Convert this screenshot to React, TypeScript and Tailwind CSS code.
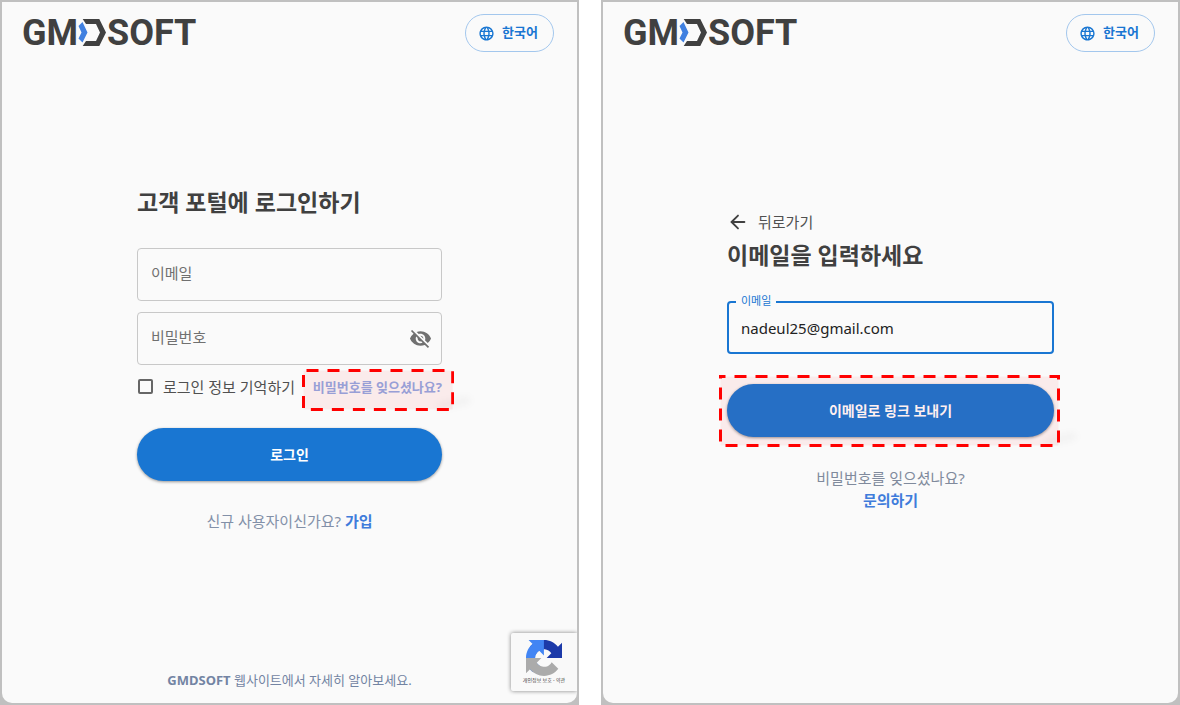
import { useState } from "react"
import type { ReactNode } from "react"
import { ArrowLeft } from "lucide-react"
import { MdLanguage, MdVisibility, MdVisibilityOff } from "react-icons/md"

function Logo() {
  return (
    <svg viewBox="0 0 173 27" className="mt-[5px] h-[27px] w-[173px] overflow-visible" role="img" aria-label="GMDSOFT">
      <g fill="#404040" fontFamily="Roboto, sans-serif" fontWeight="700" fontSize="36">
        <text x="-2" y="26">GM</text>
        <text x="83" y="26">SOFT</text>
      </g>
      <path d="M58.5 3 63.5 13.4 58.5 23.5 54.5 19.5 57.5 13.4 54.5 7Z" fill="#4080e0" />
      <path
        d="M58.7 0H75.3L82 13.4 75.3 27H58.7L62 22H72L76 13.4 72 5H62Z"
        fill="#404040"
      />
    </svg>
  )
}

function LanguageButton() {
  return (
    <button
      type="button"
      className="flex h-[38px] items-center gap-[7px] rounded-full border border-[#a3c7ed] pr-[15px] pl-3 text-[13px] font-bold text-[#1976d2]"
    >
      <MdLanguage size={17} />
      한국어
    </button>
  )
}

// Dashed red callout drawn over a control
function Callout({ offset, className }: { offset: number; className: string }) {
  return (
    <div className={`pointer-events-none absolute ${className}`}>
      <div className="absolute -right-4 bottom-1 h-2 w-8 -rotate-12 bg-black/3 blur-[3px]" />
      <svg className="absolute inset-0 h-full w-full" aria-hidden="true">
        <rect
          x="1.5"
          y="1.5"
          className="h-[calc(100%-3px)] w-[calc(100%-3px)]"
          fill="#ff0000"
          fillOpacity="0.06"
          stroke="#ff0000"
          strokeWidth="3"
          strokeDasharray="12 9"
          strokeDashoffset={offset}
        />
      </svg>
    </div>
  )
}

function Panel({ children, footer }: { children: ReactNode; footer?: ReactNode }) {
  return (
    <section className="flex bg-[#c0c0c0] p-[2px]">
      <div className="relative flex flex-1 flex-col overflow-hidden rounded-b-[10px] bg-[#fafafa]">
        <header className="flex items-start justify-between pt-3 pr-[23px] pl-[22px]">
          <Logo />
          <LanguageButton />
        </header>
        <main className="flex flex-1 flex-col items-center justify-center">{children}</main>
        <footer className="h-[35px] text-center text-[13px] leading-[24px] text-[#7384a3]">{footer}</footer>
      </div>
    </section>
  )
}

function SubmitButton({ children }: { children: ReactNode }) {
  return (
    <button
      type="submit"
      className="h-[53px] w-full rounded-full bg-[#1976d2] text-[14px] font-bold text-white shadow-[0_1px_3px_rgba(0,0,0,0.4)]"
    >
      {children}
    </button>
  )
}

function RecaptchaBadge() {
  return (
    <aside className="absolute right-0 bottom-3 flex h-[58px] w-[66px] flex-col items-center rounded-l-[2px] bg-[#f9f9f9] pt-[7px] shadow-[0_0_4px_#808080]">
      <svg viewBox="0 0 64 64" className="size-9" aria-hidden="true">
        <path
          d="M64 31.955l-.033-1.37V4.687l-7.16 7.16C50.948 4.674 42.033.093 32.05.093c-10.4 0-19.622 4.96-25.458 12.64l11.736 11.86a15.55 15.55 0 0 1 4.754-5.334c2.05-1.6 4.952-2.906 8.968-2.906.485 0 .86.057 1.135.163 4.976.393 9.288 3.14 11.828 7.124l-8.307 8.307L64 31.953"
          fill="#1c3aa9"
        />
        <path
          d="M31.862.094l-1.37.033H4.594l7.16 7.16C4.58 13.147 0 22.06 0 32.046c0 10.4 4.96 19.622 12.64 25.458L24.5 45.768a15.55 15.55 0 0 1-5.334-4.754c-1.6-2.05-2.906-4.952-2.906-8.968 0-.485.057-.86.163-1.135.393-4.976 3.14-9.288 7.124-11.828l8.307 8.307L31.86.095"
          fill="#4285f4"
        />
        <path
          d="M.001 32.045l.033 1.37v25.898l7.16-7.16c5.86 7.173 14.774 11.754 24.76 11.754 10.4 0 19.622-4.96 25.458-12.64l-11.736-11.86a15.55 15.55 0 0 1-4.754 5.334c-2.05 1.6-4.952 2.906-8.968 2.906-.485 0-.86-.057-1.135-.163-4.976-.393-9.288-3.14-11.828-7.124l8.307-8.307c-10.522.04-22.4.066-27.295-.005"
          fill="#ababab"
        />
      </svg>
      <p className="text-[5px] leading-[8px] text-[#444444]">
        <a href="#privacy">개인정보 보호</a> - <a href="#terms">약관</a>
      </p>
    </aside>
  )
}

const fieldClass =
  "peer h-[53px] w-full rounded-[4px] border border-[#c8c8c8] bg-transparent px-[13px] text-[15px] text-[#222222] outline-none"
const fieldLabelClass =
  "pointer-events-none absolute top-[14px] left-[14px] text-[15px] leading-[22px] text-[#707070] peer-focus:invisible peer-valid:invisible"

function LoginPanel() {
  const [visible, setVisible] = useState(false)

  return (
    <Panel
      footer={
        <>
          <a href="#website" className="font-bold">GMDSOFT</a> 웹사이트에서 자세히 알아보세요.
        </>
      }
    >
      <form className="w-[305px] max-w-full" onSubmit={(e) => e.preventDefault()}>
        <h1 className="text-[23px] leading-[28px] font-bold text-[#404040]">고객 포털에 로그인하기</h1>

        <div className="relative mt-8">
          <input id="login-email" type="text" required className={fieldClass} />
          <label htmlFor="login-email" className={fieldLabelClass}>이메일</label>
        </div>

        <div className="relative mt-[11px]">
          <input id="login-password" type={visible ? "text" : "password"} required className={fieldClass} />
          <label htmlFor="login-password" className={fieldLabelClass}>비밀번호</label>
          <button
            type="button"
            aria-label="비밀번호 표시"
            onClick={() => setVisible(!visible)}
            className="absolute top-[15px] right-[10px] text-[#707070]"
          >
            {visible ? <MdVisibility size={23} /> : <MdVisibilityOff size={23} />}
          </button>
        </div>

        <div className="flex h-[43px] items-center justify-between">
          <label className="flex items-center gap-[10px] pl-px text-[15px] leading-[22px] text-[#505050]">
            <input
              type="checkbox"
              className="size-[15px] appearance-none rounded-[2px] border-2 border-[#666666] checked:bg-[#1976d2]"
            />
            로그인 정보 기억하기
          </label>
          <div className="relative text-[13px] leading-[20px]">
            <a href="#forgot" className="font-bold text-[#92a9e4]">비밀번호를 잊으셨나요?</a>
            <Callout offset={-3} className="-top-[8px] -right-[12px] -bottom-[14px] -left-[11px]" />
          </div>
        </div>

        <div className="mt-5">
          <SubmitButton>로그인</SubmitButton>
        </div>

        <p className="mt-[29px] text-center text-[15px] leading-[22px] text-[#8290a8]">
          신규 사용자이신가요? <a href="#signup" className="font-bold text-[#3f7cdb]">가입</a>
        </p>
      </form>
      <RecaptchaBadge />
    </Panel>
  )
}

function ResetPanel() {
  const [email, setEmail] = useState("nadeul25@gmail.com")

  return (
    <Panel>
      <form className="w-[327px] max-w-full pt-[2px]" onSubmit={(e) => e.preventDefault()}>
        <a href="#back" className="flex items-center gap-[9px] text-[15px] leading-[22px] text-[#505050]">
          <ArrowLeft size={22} strokeWidth={2} className="text-[#404040]" />
          뒤로가기
        </a>
        <h1 className="mt-2 text-[23px] leading-[28px] font-bold text-[#404040]">이메일을 입력하세요</h1>

        <div className="relative mt-8">
          <input
            id="reset-email"
            type="email"
            value={email}
            onChange={(e) => setEmail(e.target.value)}
            className="h-[53px] w-full rounded-[4px] border-2 border-[#1976d2] bg-transparent px-3 text-[15px] text-[#222222] outline-none"
          />
          <label
            htmlFor="reset-email"
            className="absolute -top-[8px] left-[9px] bg-[#fafafa] px-[5px] text-[11px] leading-[16px] text-[#1976d2]"
          >
            이메일
          </label>
        </div>

        <div className="relative mt-[30px]">
          <SubmitButton>이메일로 링크 보내기</SubmitButton>
          <Callout offset={7} className="-top-[9px] -right-[6px] -bottom-[10px] -left-[8px]" />
        </div>

        <p className="mt-[30px] text-center text-[15px] leading-[22px] text-[#808a9c]">
          비밀번호를 잊으셨나요?
          <a href="#contact" className="block font-bold text-[#3f7cdb]">문의하기</a>
        </p>
      </form>
    </Panel>
  )
}

export default function App() {
  return (
    <div className="grid min-h-screen grid-cols-2 gap-[22px] bg-white font-['Noto_Sans','Noto_Sans_CJK_KR',sans-serif]">
      <LoginPanel />
      <ResetPanel />
    </div>
  )
}
